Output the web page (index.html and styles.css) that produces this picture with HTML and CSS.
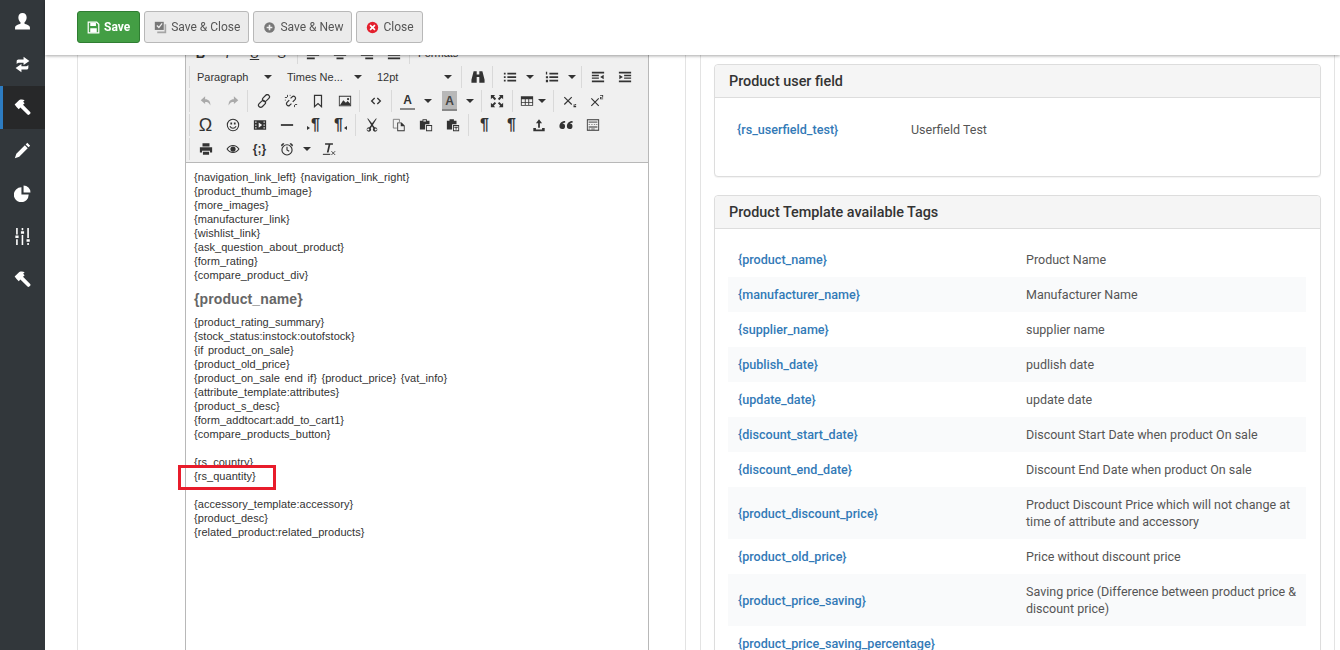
FILE: index.html
```html
<!DOCTYPE html>
<html lang="en">
<head>
    <meta charset="UTF-8">
    <title>Product template</title>
    <link rel="stylesheet" href="styles.css">
</head>
<body>
<svg class="sprite" width="0" height="0">
    <symbol id="i-hammer" viewBox="0 0 16 16"><path d="M.6 5.2 5 .9c1.7-.7 3.6-.6 5 .3L8.600 2.600l1.400 1.400-1.500 1.500 6.700 6.700c.5.500.5 1.200 0 1.700l-.8.800c-.5.500-1.200.5-1.700 0L6 8.100 4.500 9.600 3.300 8.400 2.600 7.700z"/></symbol>
</svg>

<nav class="sidebar">
    <a class="side-item"><svg viewBox="0 0 16 16"><path d="M8 0c2.500 0 3.900 1.800 3.900 4.200 0 1.900-.9 3.700-2 4.600v1.300c1.300.6 5.100 1.400 5.100 3.500V15.500H1v-1.900c0-2.100 3.800-2.900 5.100-3.500V8.800c-1.100-.9-2-2.700-2-4.600C4.100 1.800 5.500 0 8 0z"/></svg></a>
    <a class="side-item"><svg viewBox="0 0 16 16"><path d="M2.500 7.500V5c0-1 .7-1.700 1.700-1.700H9V.8l5.500 3.900L9 8.500V6.300H5.500C4 6.300 3.200 6.800 2.500 7.500z"/><path d="M2.500 7.500V5c0-1 .7-1.700 1.700-1.700H9V.8l5.500 3.900L9 8.500V6.300H5.500C4 6.300 3.200 6.800 2.500 7.500z" transform="rotate(180 8 8)"/></svg></a>
    <a class="side-item side-active"><svg><use href="#i-hammer"/></svg></a>
    <a class="side-item"><svg viewBox="0 0 16 16"><path d="M12.500.8 15.200 3.500 13.700 5 11 2.300zM10.200 3.100l2.700 2.700-8 8L.8 15.200 2.200 11.100z"/></svg></a>
    <a class="side-item"><svg viewBox="0 0 16 16"><path d="M7 2.200V9h6.800A7 7 0 1 1 7 2.200zM9 .5A6.500 6.500 0 0 1 15.500 7H9z"/></svg></a>
    <a class="side-item"><svg viewBox="0 0 16 16"><path d="M2 0h1.500v6H2zM1.300 7h3v2.500h-3zM2 10.500h1.500V16H2zM7.200 0h1.500v2H7.200zM6.500 3h3v2.500h-3zM7.200 6.500h1.500V16H7.200zM12.500 0H14v9.500h-1.500zM11.800 10.500h3V13h-3zM12.500 14H14v2h-1.500z"/></svg></a>
    <a class="side-item"><svg><use href="#i-hammer"/></svg></a>
</nav>

<!-- Верхняя панель лежит поверх прокрученного содержимого -->
<div class="topbar">
    <button class="btn btn-save"><svg viewBox="0 0 16 16"><path d="M1.500 1.500h10.500l2.500 2.500v10.500h-13z" fill="none" stroke="currentColor" stroke-width="1.500"/><path d="M4 2h7v4H4zM4 9h8v5H4z"/></svg>Save</button>
    <button class="btn"><svg viewBox="0 0 16 16" class="ico-grey"><path d="M1 1h11v10H1z"/><path d="M13 4h2v11H4v-2h9z" opacity=".6"/><path d="M3.500 5.500 6 8l4-5" fill="none" stroke="#eee" stroke-width="1.500"/></svg>Save &amp; Close</button>
    <button class="btn"><svg viewBox="0 0 16 16" class="ico-grey"><circle cx="8" cy="8" r="6.500"/><path d="M7 4.500h2V7h2.500v2H9v2.500H7V9H4.500V7H7z" fill="#eee"/></svg>Save &amp; New</button>
    <button class="btn"><svg viewBox="0 0 16 16" class="ico-red"><circle cx="8" cy="8" r="7"/><path d="M5 5l6 6M11 5l-6 6" stroke="#fff" stroke-width="2"/></svg>Close</button>
</div>

<main class="content">
    <section class="panel panel-left">
        <div class="editor">
            <div class="mce-toolbar">
                <div class="mce-row">
                    <div class="mce-group group-first">
                        <span class="tb-btn tb-txt tb-b">B</span>
                        <span class="tb-btn tb-txt tb-i">I</span>
                        <span class="tb-btn tb-txt tb-u">U</span>
                        <span class="tb-btn tb-txt tb-s">S</span>
                    </div>
                    <div class="mce-group m2 pad1">
                        <span class="tb-btn"><svg viewBox="0 0 16 16"><path d="M1 1h14v2H1zM1 5h9v2H1zM1 9h14v2H1zM1 13h9v2H1z"/></svg></span>
                        <span class="tb-btn"><svg viewBox="0 0 16 16"><path d="M1 1h14v2H1zM4 5h8v2H4zM1 9h14v2H1zM4 13h8v2H4z"/></svg></span>
                        <span class="tb-btn"><svg viewBox="0 0 16 16"><path d="M1 1h14v2H1zM6 5h9v2H6zM1 9h14v2H1zM6 13h9v2H6z"/></svg></span>
                        <span class="tb-btn"><svg viewBox="0 0 16 16"><path d="M1 1h14v2H1zM1 5h14v2H1zM1 9h14v2H1zM1 13h14v2H1z"/></svg></span>
                    </div>
                    <div class="mce-group m2"><span class="tb-list tb-formats">Formats</span></div>
                </div>
                <div class="mce-row">
                    <div class="mce-group pad1">
                        <span class="tb-list">Paragraph<i class="caret"></i></span>
                        <span class="tb-list">Times Ne...<i class="caret"></i></span>
                        <span class="tb-list tb-list-last">12pt<i class="caret"></i></span>
                    </div>
                    <div class="mce-group">
                        <span class="tb-btn"><svg viewBox="0 0 16 16"><path d="M3 1.500h3.500v3.500h3V1.500H13l2.500 9.500v3.500H9.500V8h-3v6.500H.500V11z"/></svg></span>
                    </div>
                    <div class="mce-group pad3">
                        <span class="tb-btn"><svg viewBox="0 0 16 16"><path d="M1 3h2v2H1zM5 3h10v2H5zM1 7h2v2H1zM5 7h10v2H5zM1 11h2v2H1zM5 11h10v2H5z"/></svg></span>
                        <i class="caret caret-btn"></i>
                        <span class="tb-btn"><svg viewBox="0 0 16 16"><path d="M1 2h1.500v3H1zM5 3h10v2H5zM1 7h2.500v2.500H1zM5 7h10v2H5zM1 11h2.500v3H1zM5 11h10v2H5z"/></svg></span>
                        <i class="caret caret-btn"></i>
                    </div>
                    <div class="mce-group">
                        <span class="tb-btn"><svg viewBox="0 0 16 16"><path d="M1 2h14v2H1zM1 5.500h8v1.500H1zM1 8.500h8V10H1zM1 12h14v2H1zM14.500 5.500v5L10.500 8z"/></svg></span>
                        <span class="tb-btn"><svg viewBox="0 0 16 16"><path d="M1 2h14v2H1zM7 5.500h8v1.500H7zM7 8.500h8V10H7zM1 12h14v2H1zM1.500 5.500v5L5.500 8z"/></svg></span>
                    </div>
                </div>
                <div class="mce-row">
                    <div class="mce-group">
                        <span class="tb-btn tb-off"><svg viewBox="0 0 16 16"><path d="M7 2.500 2 7l5 4.500V9c2.500 0 4.500.5 6 4 .2-4.500-1.800-7-6-7z"/></svg></span>
                        <span class="tb-btn tb-off"><svg viewBox="0 0 16 16"><path d="M9 2.500 14 7l-5 4.500V9c-2.500 0-4.500.5-6 4-.2-4.500 1.800-7 6-7z"/></svg></span>
                    </div>
                    <div class="mce-group">
                        <span class="tb-btn"><svg viewBox="0 0 16 16"><g fill="none" stroke="currentColor" stroke-width="1.400"><rect x="0" y="5.500" width="9" height="5" rx="2.400" transform="rotate(-45 4.500 8) translate(-1.500 3.200)"/><rect x="7" y="5.500" width="9" height="5" rx="2.400" transform="rotate(-45 11.500 8) translate(1.500 -3.200)"/></g></svg></span>
                        <span class="tb-btn"><svg viewBox="0 0 16 16"><g fill="none" stroke="currentColor" stroke-width="1.400"><path d="M6 7 3.200 9.800a2.300 2.300 0 0 0 3.200 3.200L8.500 11M10 9l2.800-2.800a2.300 2.300 0 0 0-3.200-3.200L7.500 5"/><path d="M1 4h2.500M4 1v2.500M12 12.500V15M12.500 12H15M1 7h1M7 1v1" stroke-width="1"/></g></svg></span>
                        <span class="tb-btn"><svg viewBox="0 0 16 16"><path d="M4 1.500h8v13L8 11l-4 3.500z" fill="none" stroke="currentColor" stroke-width="1.400"/></svg></span>
                        <span class="tb-btn"><svg viewBox="0 0 16 16"><path d="M1 2h14v12H1zM2 3v10h12V3z" fill-rule="evenodd"/><path d="M2 13 6 7l3 3 2-2 3 3v2zM11.500 4.500a1.300 1.300 0 1 1 0 2.600 1.300 1.300 0 0 1 0-2.600z"/></svg></span>
                    </div>
                    <div class="mce-group">
                        <span class="tb-btn"><svg viewBox="0 0 16 16"><path d="M6.500 4.500 3 8l3.500 3.500M9.500 4.500 13 8l-3.500 3.500" fill="none" stroke="currentColor" stroke-width="1.500"/></svg></span>
                    </div>
                    <div class="mce-group m2">
                        <span class="tb-btn tb-color"><span class="tb-a">A</span></span>
                        <i class="caret caret-btn"></i>
                        <span class="tb-btn tb-color tb-color-bg"><span class="tb-a">A</span></span>
                        <i class="caret caret-btn"></i>
                    </div>
                    <div class="mce-group m3 pad1">
                        <span class="tb-btn"><svg viewBox="0 0 16 16"><path d="M1 1h5L4.300 2.700 7 5.400 5.400 7 2.700 4.300 1 6zM15 1v5l-1.700-1.700L10.600 7 9 5.400l2.700-2.700L10 1zM1 15v-5l1.700 1.700L5.400 9 7 10.600l-2.700 2.700L6 15zM15 15h-5l1.700-1.700L9 10.600 10.600 9l2.700 2.700L15 10z"/></svg></span>
                    </div>
                    <div class="mce-group m2">
                        <span class="tb-btn tb-btn-tight"><svg viewBox="0 0 16 16"><path d="M1 2.500h14v11H1zM2 6v3h3.500V6zM6.500 6v3h3V6zM10.500 6v3H14V6zM2 10v2.500h3.500V10zM6.500 10v2.500h3V10zM10.500 10v2.500H14V10z" fill-rule="evenodd"/></svg></span>
                        <i class="caret caret-btn caret-tight"></i>
                    </div>
                    <div class="mce-group m3">
                        <span class="tb-btn"><svg viewBox="0 0 16 16"><path d="M1.500 3.500 10 12M10 3.500 1.500 12" fill="none" stroke="currentColor" stroke-width="1.300"/><path d="M12 11.500h3v1h-2v1h2v1.500h-3v-1.500h0v-.7h2v-.800h-2z"/></svg></span>
                        <span class="tb-btn"><svg viewBox="0 0 16 16"><path d="M1.500 5 10 13.500M10 5l-8.500 8.500" fill="none" stroke="currentColor" stroke-width="1.300"/><path d="M11.500 1h3.500v3h-2.500v1H15v1h-3.500V3.500H14V2h-2.500z"/></svg></span>
                    </div>
                </div>
                <div class="mce-row">
                    <div class="mce-group">
                        <span class="tb-btn tb-txt tb-omega">Ω</span>
                        <span class="tb-btn"><svg viewBox="0 0 16 16"><g fill="none" stroke="currentColor" stroke-width="1.200"><circle cx="8" cy="8" r="6.500"/><path d="M4.500 9.500c1.500 3 5.500 3 7 0"/></g><path d="M5 5h2v2.500H5zM9 5h2v2.500H9z"/></svg></span>
                        <span class="tb-btn"><svg viewBox="0 0 16 16"><path d="M1 2.500h14v11H1zM2.500 4v1.500H4V4zM2.500 7.300v1.500H4V7.300zM2.500 10.500V12H4v-1.500zM12 4v1.500h1.500V4zM12 7.300v1.500h1.500V7.300zM12 10.500V12h1.500v-1.500zM6.500 5v6L10.500 8z" fill-rule="evenodd"/></svg></span>
                        <span class="tb-btn"><svg viewBox="0 0 16 16"><path d="M1 7h14v2H1z"/></svg></span>
                        <span class="tb-btn tb-txt tb-pil tb-pil-l">¶</span>
                        <span class="tb-btn tb-txt tb-pil tb-pil-r">¶</span>
                    </div>
                    <div class="mce-group">
                        <span class="tb-btn"><svg viewBox="0 0 16 16"><path d="M3.500 1 8 6.500 12.500 1h1L9 8.500l2 2.700a2.500 2.500 0 1 1-1.500 1L8 10l-1.500 2.200a2.500 2.500 0 1 1-1.500-1L7 8.500 2.500 1zM3.700 12.500a1.200 1.200 0 1 0 0 2.400 1.200 1.200 0 0 0 0-2.400zM12.300 12.500a1.200 1.200 0 1 0 0 2.400 1.200 1.200 0 0 0 0-2.400z" transform="translate(0 -.5)" fill-rule="evenodd"/></svg></span>
                        <span class="tb-btn"><svg viewBox="0 0 16 16"><path d="M1.500 1.500h7v3M1.500 1.500v10h4" fill="none" stroke="#777" stroke-width="1"/><path d="M6 5h5l3.500 3.500v6.500H6zM7 6v8h6.500V9.500H10V6z" fill-rule="evenodd"/></svg></span>
                        <span class="tb-btn"><svg viewBox="0 0 16 16"><path d="M1 3h3V1.500h5V3h3v4H7v6H1zM5 2.500V4h3V2.500z" fill-rule="evenodd"/><path d="M8 8h7v7H8zM9 9v5h5V9z" fill-rule="evenodd"/></svg></span>
                        <span class="tb-btn"><svg viewBox="0 0 16 16"><path d="M1 3h3V1.500h5V3h3v4H7v6H1z"/><path d="M8 8h7v7H8zM9 9v5h5V9zM9.500 10h4v1h-1.500v2.500h-1V11H9.500z" fill-rule="evenodd"/></svg></span>
                    </div>
                    <div class="mce-group m2">
                        <span class="tb-btn tb-txt tb-pil">¶</span>
                        <span class="tb-btn tb-txt tb-pil">¶</span>
                        <span class="tb-btn"><svg viewBox="0 0 16 16"><path d="M8 1.500 11.500 6H9v5H7V6H4.500zM1.500 11.500h3V13h7v-1.500h3V15h-13z"/></svg></span>
                        <span class="tb-btn"><svg viewBox="0 0 16 16"><path d="M7 3.500C4 3.500 .5 5.500 .5 9.500a3.200 3.200 0 1 0 3.500-3.200c.3-.8 1.500-1 3-1zM15.500 3.500c-3 0-6.500 2-6.500 6a3.200 3.200 0 1 0 3.500-3.200c.3-.8 1.500-1 3-1z"/></svg></span>
                        <span class="tb-btn"><svg viewBox="0 0 16 16"><path d="M1 1.500h14v13H1zM2 2.500v11h12v-11z" fill-rule="evenodd"/><path d="M3 4h10v1.500H3zM3 7h1.500v1H3zM6 7h1.500v1H6zM9 7h1.500v1H9zM11.500 7H13v1h-1.500zM3 9.500h10V11H3zM3 12h1.500v1H3zM6 12h4v1H6z" opacity=".7"/></svg></span>
                    </div>
                </div>
                <div class="mce-row">
                    <div class="mce-group">
                        <span class="tb-btn"><svg viewBox="0 0 16 16"><path d="M4 1.500h8v3.500H4zM1 6h14v6h-2.500v-2h-9v2H1zM4.500 11h7v3.500h-7z"/></svg></span>
                        <span class="tb-btn"><svg viewBox="0 0 16 16"><path d="M.5 8C2.500 5 5 3.500 8 3.500S13.500 5 15.500 8c-2 3-4.500 4.500-7.500 4.500S2.500 11 .5 8zM2 8c1.500 2.200 3.500 3.500 6 3.500S12.500 10.200 14 8c-1.500-2.200-3.500-3.500-6-3.500S3.500 5.800 2 8zM8 5a3 3 0 1 1 0 6 3 3 0 0 1 0-6z" fill-rule="evenodd"/></svg></span>
                        <span class="tb-btn tb-txt tb-code">{<b>;</b>}</span>
                        <span class="tb-btn"><svg viewBox="0 0 16 16"><g fill="none" stroke="currentColor" stroke-width="1.300"><circle cx="8" cy="9" r="5.800"/><path d="M8 5.500V9l2.500 1.500"/></g><path d="M1 3.500 3.500 1l1.500 1-3 3zM15 3.500 12.500 1 11 2l3 3z"/></svg></span>
                        <i class="caret caret-btn"></i>
                        <span class="tb-btn"><svg viewBox="0 0 16 16"><path d="M3.500 1.500h9V3H9.500L7.500 12H5.500l2-9H3.500z"/><path d="M1 13.500h8.500v1.200H1z"/><path d="M10.800 10.500 15 14.800M15 10.500l-4.200 4.300" fill="none" stroke="currentColor" stroke-width="1"/></svg></span>
                    </div>
                </div>
            </div>
            <div class="editor-body">
                <p>{navigation_link_left} {navigation_link_right}<br>{product_thumb_image}<br>{more_images}<br>{manufacturer_link}<br>{wishlist_link}<br>{ask_question_about_product}<br>{form_rating}<br>{compare_product_div}</p>
                <h2>{product_name}</h2>
                <p>{product_rating_summary}<br>{stock_status:instock:outofstock}<br>{if product_on_sale}<br>{product_old_price}<br>{product_on_sale end if} {product_price} {vat_info}<br>{attribute_template:attributes}<br>{product_s_desc}<br>{form_addtocart:add_to_cart1}<br>{compare_products_button}</p>
                <p>{rs_country}<br>{rs_quantity}</p>
                <p>{accessory_template:accessory}<br>{product_desc}<br>{related_product:related_products}</p>
                <div class="mark"></div>
            </div>
        </div>
    </section>

    <section class="panel panel-right">
        <div class="card card-user">
            <div class="card-head">Product user field</div>
            <div class="card-body user-row">
                <a class="tag tag-user">{rs_userfield_test}</a>
                <span>Userfield Test</span>
            </div>
        </div>
        <div class="card">
            <div class="card-head">Product Template available Tags</div>
            <div class="card-body">
                <table class="tags">
                    <tr><td><a class="tag">{product_name}</a></td><td>Product Name</td></tr>
                    <tr><td><a class="tag">{manufacturer_name}</a></td><td>Manufacturer Name</td></tr>
                    <tr><td><a class="tag">{supplier_name}</a></td><td>supplier name</td></tr>
                    <tr><td><a class="tag">{publish_date}</a></td><td>pudlish date</td></tr>
                    <tr><td><a class="tag">{update_date}</a></td><td>update date</td></tr>
                    <tr><td><a class="tag">{discount_start_date}</a></td><td>Discount Start Date when product On sale</td></tr>
                    <tr><td><a class="tag">{discount_end_date}</a></td><td>Discount End Date when product On sale</td></tr>
                    <tr><td><a class="tag">{product_discount_price}</a></td><td>Product Discount Price which will not change at time of attribute and accessory</td></tr>
                    <tr><td><a class="tag">{product_old_price}</a></td><td>Price without discount price</td></tr>
                    <tr><td><a class="tag">{product_price_saving}</a></td><td>Saving price (Difference between product price &amp; discount price)</td></tr>
                    <tr><td><a class="tag">{product_price_saving_percentage}</a></td><td></td></tr>
                </table>
            </div>
        </div>
    </section>
</main>
</body>
</html>
```

FILE: styles.css
```css
/* Сброс базовых стилей */
*, *::before, *::after {
    box-sizing: border-box;
    margin: 0;
    padding: 0;
}
html, body {
    height: 650px;
    overflow: hidden;
}
body {
    font-family: 'Roboto', sans-serif;
    font-size: 12.5px;
    color: #555;
    background: #fff;
    display: flex;
}
.sprite {
    position: absolute;
}
svg {
    fill: currentColor;
}

/* Боковое меню */
.sidebar {
    flex: 0 0 45px;
    background: #32373b;
    display: flex;
    flex-direction: column;
}
.side-item {
    height: 43px;
    display: flex;
    align-items: center;
    justify-content: center;
    color: #fff;
}
.side-item svg {
    width: 17px;
    height: 17px;
}
.side-active {
    background: #272829;
    border-left: 3px solid #2d7cc1;
    padding-right: 3px;
}

/* Верхняя панель */
.topbar {
    position: fixed;
    top: 0;
    left: 45px;
    right: 0;
    height: 55px;
    background: #fff;
    box-shadow: 0 1px 3px rgba(0,0,0,0.35);
    display: flex;
    gap: 4px;
    padding: 11px 0 0 32px;
    z-index: 5;
}
.btn {
    height: 32px;
    display: flex;
    align-items: center;
    gap: 4px;
    padding: 0 8px 0 9px;
    border: 1px solid #b8b8b8;
    border-radius: 3px;
    background: #ebebeb;
    color: #555;
    font-family: inherit;
    font-size: 12px;
}
.btn svg {
    width: 13px;
    height: 13px;
}
.btn-save {
    padding-right: 9px;
    background: #439e44;
    border-color: #2f7d32;
    color: #fff;
    font-weight: 700;
}
.ico-grey {
    color: #777;
}
.ico-red {
    color: #e3202e;
}

/* Содержимое */
.content {
    flex: 1;
    display: flex;
    gap: 14px;
    padding-left: 32px;
    height: 650px;
}
.panel {
    border: solid #e3e3e3;
    border-width: 0 1px;
}
.panel-left {
    flex: 0 0 609px;
    padding: 41px 36px 0 107px;
}
.panel-right {
    flex: 0 0 635px;
    padding: 64px 13px 0;
}

/* Редактор */
.editor {
    height: 620px;
    border: 1px solid #b8b8b8;
    border-top: 0;
    color: #333;
}
.mce-toolbar {
    height: 122px;
    background: #f0f0f0;
    border-bottom: 1px solid #b8b8b8;
    padding-left: 3px;
    font-family: 'Liberation Sans', Arial, sans-serif;
    font-size: 11px;
}
.mce-row {
    height: 24px;
    display: flex;
    align-items: center;
}
.mce-group {
    height: 22px;
    display: flex;
    align-items: center;
    padding-left: 2px;
    border-left: 1px solid #d9d9d9;
}
.mce-group + .mce-group {
    margin-left: 1px;
}
.mce-group.m2 {
    margin-left: 2px;
}
.mce-group.m3 {
    margin-left: 3px;
}
.pad1 {
    padding-left: 1px;
}
.pad3 {
    padding-left: 3px;
}
.group-first {
    margin-left: -2px;
    padding-left: 0;
    border-left: 0;
}
.tb-btn {
    flex: 0 0 27px;
    height: 22px;
    display: flex;
    align-items: center;
    justify-content: center;
    color: #333;
}
.tb-btn svg {
    width: 14px;
    height: 14px;
}
.tb-btn-tight {
    flex-basis: 24px;
}
.tb-off {
    color: #aaa;
}
.tb-txt {
    font-size: 13px;
}
.tb-b {
    font-weight: 700;
}
.tb-i {
    font-style: italic;
}
.tb-u {
    text-decoration: underline;
}
.tb-s {
    text-decoration: line-through;
}
.tb-omega {
    font-size: 18px;
}
.tb-pil {
    position: relative;
    font-family: 'Liberation Sans', sans-serif;
    font-size: 16px;
    font-weight: 700;
}
/* Маленькие стрелки направления текста */
.tb-pil-l::before,
.tb-pil-r::after {
    content: "";
    border: 2.5px solid transparent;
}
.tb-pil-l::before {
    border-left: 3px solid #333;
    border-right: 0;
    margin-top: 5px;
    margin-right: 1px;
}
.tb-pil-r::after {
    border-right: 3px solid #333;
    border-left: 0;
    margin-top: 5px;
    margin-left: 1px;
}
.tb-code {
    font-size: 12px;
    font-weight: 700;
}
.tb-a {
    display: block;
    width: 15px;
    font-size: 12px;
    font-weight: 700;
    text-align: center;
    line-height: 15px;
    border-bottom: 2px solid #888;
}
.tb-color-bg .tb-a {
    background: #b8b8b8;
    padding-top: 3px;
    color: #444;
}
.tb-list {
    width: 90px;
    display: flex;
    align-items: center;
    justify-content: space-between;
    padding: 0 9px 0 6px;
    color: #333;
}
.tb-list-last {
    width: 89px;
    padding-right: 8px;
}
.tb-formats {
    width: 60px;
}
.caret {
    display: inline-block;
    width: 0;
    height: 0;
    border: 4px solid transparent;
    border-top-color: #333;
    border-bottom: 0;
}
.caret-btn {
    margin: 0 4px 0 3px;
}
.caret-tight {
    margin-left: -1px;
}

.editor-body {
    position: relative;
    padding: 7px 8px;
    font-family: 'Liberation Sans', Arial, sans-serif;
    font-size: 11px;
    letter-spacing: 0.05px;
    word-spacing: 1.5px;
    line-height: 14px;
}
.editor-body p {
    margin-bottom: 14px;
}
.editor-body h2 {
    font-size: 14px;
    line-height: 17px;
    color: #666;
    letter-spacing: 0.1px;
    margin: -5px 0 7px;
}
/* Красная рамка-пометка поверх текста */
.mark {
    position: absolute;
    left: -8px;
    top: 302px;
    width: 98px;
    height: 25px;
    border: 3px solid #e81c2b;
}

/* Карточки справа */
.card {
    border: 1px solid #ddd;
    border-radius: 4px;
    background: #fff;
    box-shadow: 0 1px 1px rgba(0,0,0,0.05);
}
.card-user {
    height: 113px;
    margin-bottom: 18px;
}
.card-head {
    height: 33px;
    line-height: 33px;
    padding-left: 14px;
    background: #f5f5f5;
    border-bottom: 1px solid #ddd;
    border-radius: 4px 4px 0 0;
    color: #333;
    font-size: 14.4px;
    font-weight: 500;
}
.card-body {
    padding: 13px 13px 0;
}
.user-row {
    display: flex;
    padding: 23px 0 0 22px;
    line-height: 17px;
}
.tag {
    color: #337ab7;
    font-size: 12.6px;
    font-weight: 500;
}
.tag-user {
    width: 174px;
}
.tags {
    width: 578px;
    border-collapse: collapse;
    table-layout: fixed;
    line-height: 17px;
}
.tags td {
    padding: 9px 4px 9px 10px;
    vertical-align: middle;
}
.tags td:first-child {
    width: 288px;
}
.tags tr:nth-child(even) {
    background: #f9fafb;
}
```
